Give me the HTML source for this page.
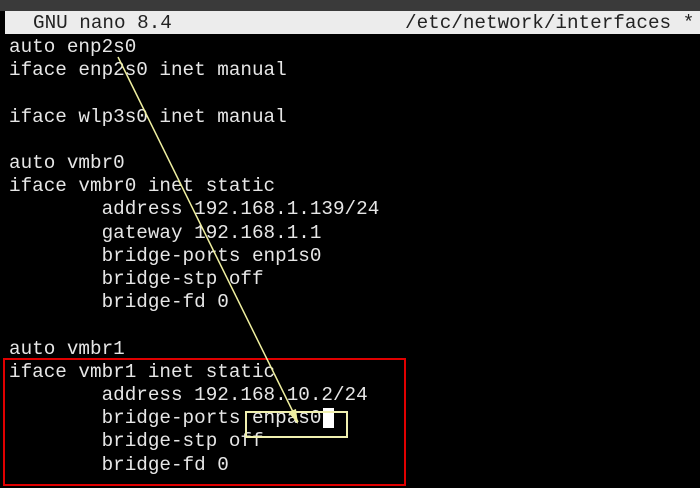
<!DOCTYPE html>
<html><head><style>
html,body{margin:0;padding:0;background:#000;width:700px;height:488px;overflow:hidden;position:relative}
.top{position:absolute;left:0;top:0;width:700px;height:11px;background:#3a3a3a}
.bar{position:absolute;left:5px;top:11px;width:695px;height:23px;background:#ececec}
.t{position:absolute;font-family:"Liberation Mono",monospace;font-size:19.3px;line-height:23.2px;white-space:pre;color:#e6e6e6}
.bt{color:#222;top:12px}
</style></head><body>
<div class="top"></div><div class="bar"></div>
<div class="t bt" style="left:33px">GNU nano 8.4</div>
<div class="t bt" style="left:405px">/etc/network/interfaces *</div>
<div class="t" style="left:9px;top:36px">auto enp2s0
iface enp2s0 inet manual

iface wlp3s0 inet manual

auto vmbr0
iface vmbr0 inet static
        address 192.168.1.139/24
        gateway 192.168.1.1
        bridge-ports enp1s0
        bridge-stp off
        bridge-fd 0

auto vmbr1
iface vmbr1 inet static
        address 192.168.10.2/24
        bridge-ports enpas0
        bridge-stp off
        bridge-fd 0</div>
<div style="position:absolute;left:323px;top:408px;width:11px;height:20px;background:#fff"></div>
<div style="position:absolute;left:3px;top:358px;width:399px;height:124px;border:2px solid #e00000"></div>
<div style="position:absolute;left:245px;top:411px;width:99px;height:23px;border:2px solid #f0f0b0"></div>
<svg width="700" height="488" style="position:absolute;left:0;top:0">
<line x1="118" y1="57" x2="298" y2="422" stroke="#f0f0a0" stroke-width="1.5"/>
<polygon points="298,424 288,412 296,409" fill="#f0f0a0"/>
</svg>
</body></html>
